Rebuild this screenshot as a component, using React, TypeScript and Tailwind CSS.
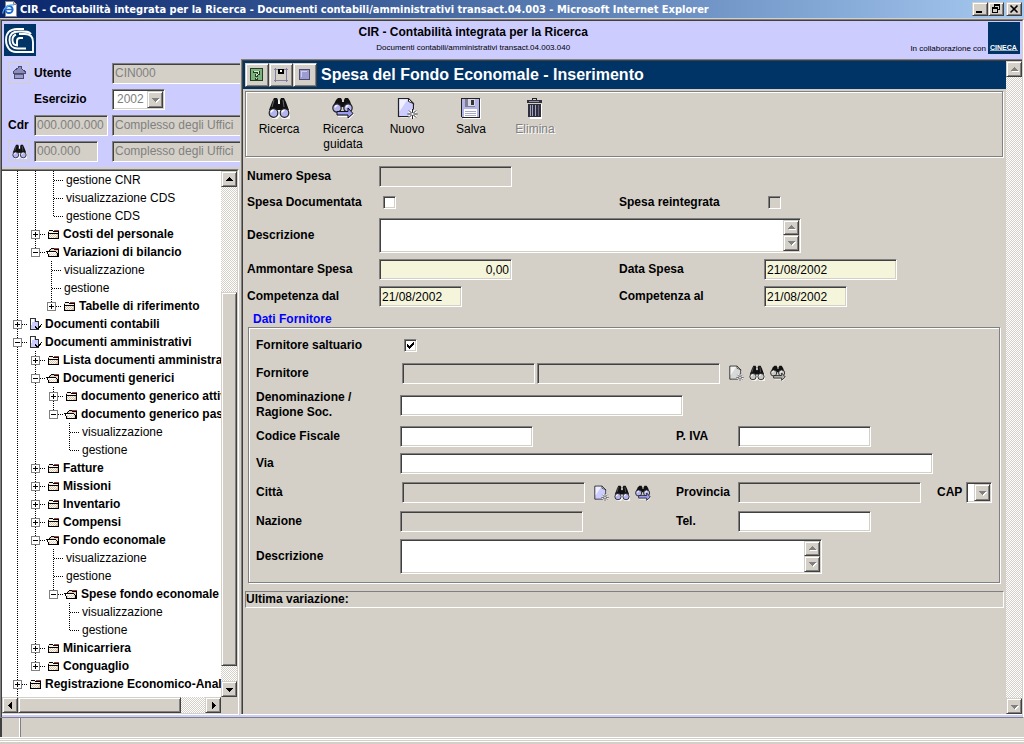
import React from "react";
import clsx from "clsx";

const sunken =
  "border border-t-[#808080] border-l-[#808080] border-r-white border-b-white shadow-[inset_1px_1px_0_#404040,inset_-1px_-1px_0_#d4d0c8]";
const raised =
  "border border-t-[#d4d0c8] border-l-[#d4d0c8] border-r-[#404040] border-b-[#404040] bg-[#d4d0c8] shadow-[inset_1px_1px_0_#fff,inset_-1px_-1px_0_#808080]";
const etched = "border border-[#808080] shadow-[inset_1px_1px_0_#fff,1px_1px_0_#fff]";
const dither = "bg-[repeating-conic-gradient(#fff_0_25%,#d4d0c8_0_50%)] bg-[length:2px_2px]";

/* ---------- icons ---------- */

interface IconProps {
  size?: number;
  muted?: boolean;
}

function Binoculars({ size = 22, muted }: IconProps) {
  const lens = muted ? "#c8c8c4" : "#b4b4ee";
  return (
    <svg width={size} height={size} viewBox="0 0 22 22" aria-hidden="true">
      <path d="M6 2h4l1 2 1-2h4l6 12v6l-4 2h-4l-3-4-3 4H5l-4-3v-5z" fill="#fff" transform="translate(1 1)" opacity=".8" />
      <path d="M6 1h3l1 2v10H1l3-8z" fill="#111" />
      <path d="M13 1h3l2 4 3 8h-9V3z" fill="#111" />
      <path d="M9 7h4v6H9z" fill="#111" />
      <path d="M6 3 4 10M15 3l1 7" stroke="#666" strokeWidth="1" fill="none" />
      <circle cx="5.5" cy="16" r="4.3" fill={lens} stroke="#222" strokeWidth="1.2" />
      <circle cx="16.5" cy="16" r="4.3" fill={lens} stroke="#222" strokeWidth="1.2" />
      <path d="M3 15.5a2.6 2.6 0 0 1 2.6-2.2M14 15.5a2.6 2.6 0 0 1 2.6-2.2" stroke="#fff" strokeWidth="1.4" fill="none" />
    </svg>
  );
}

function GuidedSearch({ size = 22, muted }: IconProps) {
  const lens = muted ? "#c8c8c4" : "#b4b4ee";
  const arrow = muted ? "#b0b0ac" : "#9c9cf0";
  return (
    <svg width={size} height={size} viewBox="0 0 22 22" aria-hidden="true">
      <path d="M6 1h3l1 2v6H1l3-6z" fill="#111" />
      <path d="M13 1h3l2 3 2 6h-8V3z" fill="#111" />
      <path d="M9 5h4v5H9z" fill="#111" />
      <circle cx="5" cy="11" r="4.2" fill={lens} stroke="#222" strokeWidth="1.2" />
      <circle cx="16" cy="11" r="4.2" fill={lens} stroke="#222" strokeWidth="1.2" />
      <path d="M3 10.5a2.4 2.4 0 0 1 2.4-2M14 10.5a2.4 2.4 0 0 1 2.4-2" stroke="#fff" strokeWidth="1.3" fill="none" />
      <path d="M6 19.500h11v2.500l5-5" stroke="#fff" fill="none" />
      <path d="M5 14.500h11v-3.500l5 5.500-5 4.500v-3H5z" fill={arrow} stroke="#111" strokeWidth="1" />
    </svg>
  );
}

function NewDocument({ size = 22, muted }: IconProps) {
  return (
    <svg width={size} height={size} viewBox="0 0 22 22" aria-hidden="true">
      <path d="M3.500 2.500h10l4 5v12h-14z" fill="#fff" transform="translate(1 1)" />
      <path d="M2.500 1.500h10l5 5v13h-15z" fill={muted ? "#d8d8d8" : "#ccccff"} stroke="#222" strokeWidth="1.200" />
      <path d="M3.500 2.500h8l-8 12z" fill="#fff" opacity=".7" />
      <path d="M12.500 1.500v3l5 2z" fill="#fff" stroke="#222" strokeWidth="1" />
      <path d="M16.500 12.500v9M12 17h9M13.300 13.700l6.600 6.600M19.900 13.700l-6.600 6.600" stroke="#fff" strokeWidth="2.600" />
      <path d="M16.500 12v10M11.500 17h10M13 13.500l7 7M20 13.500l-7 7" stroke="#222" strokeWidth="1" />
      <circle cx="16.500" cy="17" r="1.200" fill="#fff" />
    </svg>
  );
}

function Floppy() {
  return (
    <svg width="22" height="22" viewBox="0 0 22 22" shapeRendering="crispEdges" aria-hidden="true">
      <path d="M2 2h19v20H3z" fill="#fff" />
      <path d="M1.500 1.500h18v19h-17l-1-1z" fill="#b4b4e8" stroke="#222" />
      <path d="M5 2h10v8H5z" fill="#808090" />
      <path d="M8 2h7v7H8z" fill="#d8d8e8" />
      <path d="M11 3h3v5h-3z" fill="#333" />
      <path d="M4 12h13v8H4z" fill="#fff" />
      <path d="M5 14h11M5 16.500h11M5 18.500h11" stroke="#a8a8c8" />
    </svg>
  );
}

function Trash() {
  return (
    <svg width="22" height="22" viewBox="0 0 22 22" shapeRendering="crispEdges" aria-hidden="true">
      <path d="M5 7h13v15H6z" fill="#fff" />
      <path d="M8.500 3V1.500h4V3" stroke="#222" fill="none" />
      <path d="M3 3h15v3H3z" fill="#30303c" />
      <path d="M5 4h10v1H5z" fill="#9090a8" />
      <path d="M4 7h13v13H4z" fill="#30303c" />
      <path d="M6.500 8v11M8.500 8v11M11.500 8v11" stroke="#a4a4c4" />
      <path d="M14.500 8v11" stroke="#666680" />
    </svg>
  );
}

function HomeIcon() {
  return (
    <svg width="16" height="16" viewBox="0 0 16 16" shapeRendering="crispEdges" aria-hidden="true">
      <path d="M2 6.500 7 3V1h3v2l4 3.500V8H2z" fill="#8c8cc0" stroke="#4c4c68" />
      <path d="M3.500 8.500h9v5h-9z" fill="#9c9ccc" stroke="#4c4c68" />
      <path d="M4 9h8v1H4z" fill="#5c5c80" />
    </svg>
  );
}

function CnrLogo() {
  return (
    <svg width="32" height="32" viewBox="0 0 32 32" role="img" aria-label="CNR" className="shrink-0">
      <rect width="32" height="32" fill="#003366" />
      <g fill="none" stroke="#fff" strokeWidth="1.900">
        <path d="M20 5h-7C5 5 2 10 2 16c0 7 4 12 10 12h17V18c0-6-3-8-8-8h-6" />
        <path d="M27 10C25 7 21 7.500 15 7.500 9 7.500 5.500 10 5.500 16c0 5 3 8.500 8 8.500h8.500" />
        <path d="M12 10.500c-3 1-3.500 3-3.500 5.500 0 4 2 5.500 5.500 5.500M19 14h-3c-2 0-3 1-3 3v4" />
      </g>
    </svg>
  );
}

function CinecaLogo() {
  return (
    <svg width="32" height="32" viewBox="0 0 32 32" role="img" aria-label="CINECA" className="shrink-0">
      <rect width="32" height="32" fill="#003366" />
      <text x="2" y="28" fontFamily="Liberation Sans, sans-serif" fontSize="7" fontWeight="700" fill="#fff">
        CINECA
      </text>
      <path d="M2 28.500h28" stroke="#fff" strokeWidth="1" opacity=".6" />
    </svg>
  );
}

function ExplorerIcon() {
  return (
    <svg width="16" height="16" viewBox="0 0 16 16" aria-hidden="true">
      <path d="M3.500.500h8l3 3v12h-11z" fill="#fff" stroke="#888" />
      <path d="M11.500.500v3h3" fill="#d4d0c8" stroke="#888" />
      <circle cx="7" cy="8.500" r="3.600" fill="none" stroke="#1c6cd8" strokeWidth="2" />
      <path d="M4 8.500h6.500" stroke="#1c6cd8" strokeWidth="1.500" />
      <path d="M1 12.500C0 8 6 3 12 4" fill="none" stroke="#5ca8f0" strokeWidth="1.200" />
    </svg>
  );
}

type Direction = "up" | "down" | "left" | "right";

const arrowPaths: Record<Direction, string> = {
  up: "M4 9h7v-1h-1v-1h-1v-1h-1v-1h-1v1h-1v1h-1v1h-1z",
  down: "M4 6h7v1h-1v1h-1v1h-1v1h-1v-1h-1v-1h-1v-1h-1z",
  left: "M9 4v7h-1v-1h-1v-1h-1v-1h-1v-1h1v-1h1v-1h1v-1z",
  right: "M6 4v7h1v-1h1v-1h1v-1h1v-1h-1v-1h-1v-1h-1v-1z",
};

function Arrow({ dir, disabled }: { dir: Direction; disabled?: boolean }) {
  return (
    <svg width="15" height="15" viewBox="0 0 15 15" className="shrink-0" shapeRendering="crispEdges" aria-hidden="true">
      {disabled && <path d={arrowPaths[dir]} fill="#fff" transform="translate(1 1)" />}
      <path d={arrowPaths[dir]} fill={disabled ? "#808080" : "#000"} />
    </svg>
  );
}

function ScrollButton({ dir, disabled, className }: { dir: Direction; disabled?: boolean; className?: string }) {
  return (
    <button
      type="button"
      disabled={disabled}
      aria-label={`Scorri ${dir}`}
      className={clsx(raised, "flex items-center justify-center overflow-hidden", className ?? "size-4 shrink-0")}
    >
      <Arrow dir={dir} disabled={disabled} />
    </button>
  );
}

/* ---------- form controls ---------- */

function Label({ htmlFor, children }: { htmlFor: string; children: React.ReactNode }) {
  return (
    <label htmlFor={htmlFor} className="font-bold whitespace-nowrap">
      {children}
    </label>
  );
}

interface FieldProps {
  id: string;
  className: string;
  value?: string;
  label?: string;
  disabled?: boolean;
  required?: boolean;
}

function Field({ id, className, value = "", label, disabled, required }: FieldProps) {
  return (
    <input
      id={id}
      type="text"
      aria-label={label}
      defaultValue={value}
      disabled={disabled}
      className={clsx(
        sunken,
        "h-[21px] px-[2px] outline-none",
        disabled ? "bg-[#d4d0c8] text-[#808080]" : required ? "bg-[#f5f5dc]" : "bg-white",
        className
      )}
    />
  );
}

function TextArea({ id }: { id: string }) {
  return (
    <div className={clsx(sunken, "flex h-[35px] w-[422px] bg-white p-px")}>
      <textarea id={id} className="min-w-0 flex-1 resize-none overflow-hidden px-[2px] outline-none" />
      <div className="flex w-4 flex-col">
        <ScrollButton dir="up" disabled className="min-h-0 flex-1" />
        <ScrollButton dir="down" disabled className="min-h-0 flex-1" />
      </div>
    </div>
  );
}

function CheckBox({ id, checked, disabled }: { id: string; checked?: boolean; disabled?: boolean }) {
  return (
    <span className="ml-1 grid size-[13px]">
      <input
        id={id}
        type="checkbox"
        defaultChecked={checked}
        disabled={disabled}
        className={clsx(
          sunken,
          "peer col-start-1 row-start-1 size-[13px] appearance-none",
          disabled ? "bg-[#d4d0c8]" : "bg-white"
        )}
      />
      <svg
        viewBox="0 0 13 13"
        shapeRendering="crispEdges"
        className="pointer-events-none invisible col-start-1 row-start-1 size-[13px] peer-checked:visible"
        aria-hidden="true"
      >
        <path d="M3 5h1v1h1v1h1V6h1V5h1V4h1V3h1v3H9v1H8v1H7v1H6v1H5V9H4V8H3z" />
      </svg>
    </span>
  );
}

function Select({ id, value, className }: { id: string; value: string; className: string }) {
  return (
    <span className={clsx(sunken, "relative flex h-[21px] bg-white p-px", className)}>
      <select id={id} disabled className="w-full appearance-none pl-[3px] text-[#808080] opacity-100 outline-none">
        <option>{value}</option>
      </select>
      <span className={clsx(raised, "pointer-events-none absolute inset-y-px right-px flex w-4 items-center justify-center")}>
        <Arrow dir="down" disabled />
      </span>
    </span>
  );
}

function LookupButtons({ muted }: { muted?: boolean }) {
  return (
    <div className="ml-2 flex gap-[5px]">
      <button type="button" disabled={muted} aria-label="Nuovo">
        <NewDocument size={16} muted={muted} />
      </button>
      <button type="button" disabled={muted} aria-label="Ricerca">
        <Binoculars size={16} muted={muted} />
      </button>
      <button type="button" disabled={muted} aria-label="Ricerca guidata">
        <GuidedSearch size={16} muted={muted} />
      </button>
    </div>
  );
}

/* ---------- navigation tree ---------- */

type Kind = "leaf" | "closed" | "open" | "docClosed" | "docOpen";

interface TreeRow {
  // one char per ancestor: "|" draws a guide, "." leaves the column blank
  guides: string;
  kind: Kind;
  label: string;
  last?: boolean;
}

const treeRows: TreeRow[] = [
  { guides: "||", kind: "leaf", label: "gestione CNR" },
  { guides: "||", kind: "leaf", label: "visualizzazione CDS" },
  { guides: "||", kind: "leaf", label: "gestione CDS", last: true },
  { guides: "|", kind: "closed", label: "Costi del personale" },
  { guides: "|", kind: "open", label: "Variazioni di bilancio", last: true },
  { guides: "|.", kind: "leaf", label: "visualizzazione" },
  { guides: "|.", kind: "leaf", label: "gestione" },
  { guides: "|.", kind: "closed", label: "Tabelle di riferimento", last: true },
  { guides: "", kind: "docClosed", label: "Documenti contabili" },
  { guides: "", kind: "docOpen", label: "Documenti amministrativi" },
  { guides: "|", kind: "closed", label: "Lista documenti amministrativi" },
  { guides: "|", kind: "open", label: "Documenti generici" },
  { guides: "||", kind: "closed", label: "documento generico attivo" },
  { guides: "||", kind: "open", label: "documento generico passivo", last: true },
  { guides: "||.", kind: "leaf", label: "visualizzazione" },
  { guides: "||.", kind: "leaf", label: "gestione", last: true },
  { guides: "|", kind: "closed", label: "Fatture" },
  { guides: "|", kind: "closed", label: "Missioni" },
  { guides: "|", kind: "closed", label: "Inventario" },
  { guides: "|", kind: "closed", label: "Compensi" },
  { guides: "|", kind: "open", label: "Fondo economale" },
  { guides: "||", kind: "leaf", label: "visualizzazione" },
  { guides: "||", kind: "leaf", label: "gestione" },
  { guides: "||", kind: "open", label: "Spese fondo economale", last: true },
  { guides: "||.", kind: "leaf", label: "visualizzazione" },
  { guides: "||.", kind: "leaf", label: "gestione", last: true },
  { guides: "|", kind: "closed", label: "Minicarriera" },
  { guides: "|", kind: "closed", label: "Conguaglio", last: true },
  { guides: "", kind: "closed", label: "Registrazione Economico-Analitica" },
  { guides: "", kind: "closed", label: "gestione CIR" },
];

function TreeIcon({ kind }: { kind: Kind }) {
  return (
    <svg width="19" height="18" viewBox="0 0 19 18" className="shrink-0" shapeRendering="crispEdges" aria-hidden="true">
      {kind === "closed" && (
        <>
          <path d="M4 6h11v8H4z" fill="#e0c4a8" />
          <path d="M5 9h1v1H5zM7 9h1v1H7zM9 9h1v1H9zM11 9h1v1h-1zM6 10h1v1H6zM8 10h1v1H8zM10 10h1v1h-1zM12 10h1v1h-1zM5 11h1v1H5zM7 11h1v1H7zM9 11h1v1H9zM11 11h1v1h-1zM6 12h1v1H6zM8 12h1v1H8zM10 12h1v1h-1z" fill="#fff" />
          <path d="M5 6h4v1h5v1H5z" fill="#f8f0e4" />
          <path d="M4.500 14V6.500M5 5.500h4M4 8.500h11M4 13.500h11" stroke="#000" fill="none" />
          <path d="M9 6.500h5" stroke="#000" />
          <path d="M14.500 6v8" stroke="#000" />
          <path d="M10 5.500h5" stroke="#a04040" />
        </>
      )}
      {kind === "open" && (
        <>
          <path d="M5 6h9v8H5z" fill="#e8d4bc" />
          <path d="M2 8h10v2H2z" fill="#fff" />
          <path d="M2 8.500h10M3.500 9v2M4.500 11v3M5 13.500h10M12.500 9v1M13.500 10v3" stroke="#000" fill="none" />
          <path d="M5 7.500h1M6 6.500h1M7 5.500h3M10 6.500h4M14.500 6v8" stroke="#000" fill="none" />
          <path d="M6 10h1v1H6zM8 10h1v1H8zM10 10h1v1h-1zM7 11h1v1H7zM9 11h1v1H9zM11 11h1v1h-1zM6 12h1v1H6zM8 12h1v1H8zM10 12h1v1h-1z" fill="#fff" />
          <path d="M10 5.500h5" stroke="#a04040" />
        </>
      )}
      {(kind === "docClosed" || kind === "docOpen") && (
        <>
          <path d="M4.500 3.500h5l3 3v8h-8z" fill="#ccccff" stroke="#333" />
          <path d="M5 4h3v3H6v3H5z" fill="#fff" />
          <path d="M9.500 3.500v3h3" fill="#fff" stroke="#333" />
          <path d="M9 11.500h1M10 12.500h1M11 13.500h1M12 12.500h1M13 11.500h1M14 10.500h1M15 9.500h1" stroke="#000" />
          <path d="M9 12.500h1M10 13.500h3M13 12.500h1M14 11.500h1" stroke="#000" />
        </>
      )}
    </svg>
  );
}

function TreeNode({ row }: { row: TreeRow }) {
  const leaf = row.kind === "leaf";
  const expanded = row.kind === "open" || row.kind === "docOpen";
  return (
    <li className="flex h-[18px] items-center whitespace-nowrap">
      {row.guides.split("").map((g, i) => (
        <svg key={i} width={g === "|" ? 18 : 16} height="18" className="shrink-0" shapeRendering="crispEdges" aria-hidden="true">
          {g === "|" && <path d="M9.500 0v18" stroke="#000" strokeDasharray="1 1" />}
        </svg>
      ))}
      <svg width="18" height="18" className="shrink-0 overflow-visible" shapeRendering="crispEdges" aria-hidden="true">
        <path d={row.last ? "M9.500 0v10" : "M9.500 0v18"} stroke="#000" strokeDasharray="1 1" />
        <path d={leaf ? "M10 9.500h9" : "M14 9.500h6"} stroke="#000" strokeDasharray="1 1" />
        {!leaf && (
          <>
            <rect x="5.500" y="5.500" width="8" height="8" fill="#fff" stroke="#808080" />
            <path d={expanded ? "M7 9.500h5" : "M7 9.500h5M9.500 7v5"} stroke="#000" />
          </>
        )}
      </svg>
      {!leaf && <TreeIcon kind={row.kind} />}
      <a href="#" className={leaf ? "pl-1" : "font-bold"}>
        {row.label}
      </a>
    </li>
  );
}

function NavigationTree() {
  return (
    <div className="min-h-0 flex-1 border-t-2 border-r border-[#d4d0c8] bg-[#d4d0c8]">
      <div className="flex h-full flex-col border-t border-r border-b border-t-[#808080] border-r-white border-b-white">
        <div className="flex min-h-0 flex-1 flex-col border-t border-r border-b border-t-[#404040] border-r-[#d4d0c8] border-b-[#d4d0c8]">
          <div className="flex min-h-0 flex-1">
            <nav className="min-w-0 flex-1 overflow-hidden bg-white">
              <ul className="pl-[6px]">
                {treeRows.map((row, i) => (
                  <TreeNode key={i} row={row} />
                ))}
              </ul>
            </nav>
            <div className={clsx(dither, "flex w-4 flex-col")}>
              <ScrollButton dir="up" />
              <div className="grow-[106]" />
              <div className={clsx(raised, "grow-[374]")} />
              <div className="grow-[15]" />
              <ScrollButton dir="down" />
            </div>
          </div>
          <div className="flex h-4">
            <div className={clsx(dither, "flex flex-1")}>
              <ScrollButton dir="left" />
              <div className={clsx(raised, "grow-[163]")} />
              <div className="grow-[24]" />
              <ScrollButton dir="right" />
            </div>
            <div className="w-4" />
          </div>
        </div>
      </div>
    </div>
  );
}

/* ---------- page sections ---------- */

function WindowTitle() {
  const button = clsx(raised, "flex h-[14px] w-4 items-center justify-center");
  return (
    <div className="flex h-[18px] items-center bg-linear-to-r from-[#0a246a] to-[#a6caf0] pr-[2px] pl-[2px]">
      <ExplorerIcon />
      <h1 className="ml-[2px] min-w-0 flex-1 truncate font-['DejaVu_Sans_Condensed','Noto_Sans',sans-serif] text-[11px] font-bold text-white">
        CIR - Contabilità integrata per la Ricerca - Documenti contabili/amministrativi transact.04.003 - Microsoft
        Internet Explorer
      </h1>
      <button type="button" aria-label="Riduci a icona" className={button}>
        <svg width="12" height="12" viewBox="0 0 12 12" shapeRendering="crispEdges">
          <path d="M2 8h6v2H2z" />
        </svg>
      </button>
      <button type="button" aria-label="Ripristina" className={button}>
        <svg width="12" height="12" viewBox="0 0 12 12" shapeRendering="crispEdges">
          <path d="M4 1h6v2H4zM4 3h1v1H4zM9 3h1v4H9zM8 6h1v1H8zM2 4h6v2H2zM2 6h1v4H2zM7 6h1v4H7zM3 9h4v1H3z" />
        </svg>
      </button>
      <button type="button" aria-label="Chiudi" className={clsx(button, "ml-[2px]")}>
        <svg width="12" height="12" viewBox="0 0 12 12">
          <path d="M2.500 2.500l7 7M9.500 2.500l-7 7" stroke="#000" strokeWidth="1.600" />
        </svg>
      </button>
    </div>
  );
}

function SessionPanel() {
  const iconButton = "flex size-[22px] items-center justify-center border border-[#d4d0c8]";
  const row = "grid h-[26px] grid-cols-[26px_78px_1fr] items-center";
  return (
    <div className="overflow-hidden pt-px pb-[3px] pl-[6px]">
      <div className={row}>
        <button type="button" aria-label="Home" className={iconButton}>
          <HomeIcon />
        </button>
        <Label htmlFor="utente">Utente</Label>
        <Field id="utente" className="w-[200px]" value="CIN000" disabled />
      </div>
      <div className={row}>
        <span />
        <Label htmlFor="esercizio">Esercizio</Label>
        <Select id="esercizio" value="2002" className="w-[53px]" />
      </div>
      <div className={row}>
        <Label htmlFor="cdr">Cdr</Label>
        <Field id="cdr" className="w-[74px]" value="000.000.000" disabled />
        <Field id="cdr-desc" label="Descrizione Cdr" className="w-[200px]" value="Complesso degli Uffici" disabled />
      </div>
      <div className={row}>
        <button type="button" aria-label="Cerca unità" className={iconButton}>
          <Binoculars size={15} />
        </button>
        <Field id="uo" label="Unità" className="w-[64px]" value="000.000" disabled />
        <Field id="uo-desc" label="Descrizione unità" className="w-[200px]" value="Complesso degli Uffici" disabled />
      </div>
    </div>
  );
}

function ToolButton({ icon, label, disabled }: { icon: React.ReactNode; label: string; disabled?: boolean }) {
  return (
    <button
      type="button"
      disabled={disabled}
      className={clsx(
        "flex w-16 flex-col items-center px-2 text-center leading-[15px]",
        disabled && "text-[#808080] [text-shadow:1px_1px_0_#fff]"
      )}
    >
      <span className="mb-[2px] flex h-6 items-center">{icon}</span>
      {label}
    </button>
  );
}

function TitleBar() {
  const button = clsx(raised, "flex size-6 items-center justify-center");
  return (
    <div className="flex h-7 shrink-0 items-center bg-[#003366] pl-[2px] text-white">
      <button type="button" aria-label="Aiuto" className={button}>
        <svg width="14" height="14" viewBox="0 0 14 14" shapeRendering="crispEdges">
          <path d="M.500.500h12v12H.500z" fill="#7cb07c" stroke="#224022" />
          <path d="M3 3h7v4H8v2H5V6h2V5H3zM5 10h3v2H5z" fill="#224022" />
          <path d="M4 3h5v1H4zM8 4h1v2H8zM6 6h2v1H6zM6 7h1v1H6zM6 10h1v1H6z" fill="#cfe8cf" />
        </svg>
      </button>
      <button type="button" aria-label="Riduci" className={button}>
        <svg width="14" height="14" viewBox="0 0 14 14" shapeRendering="crispEdges">
          <path d="M1.500 0v14M12.500 0v14M0 12.500h14M0 1.500h14" stroke="#8080a8" fill="none" />
          <path d="M4 1h6v5H4z" />
          <path d="M6 2h2v2H6z" fill="#fff" />
        </svg>
      </button>
      <button type="button" aria-label="Ingrandisci" className={button}>
        <svg width="14" height="14" viewBox="0 0 14 14" shapeRendering="crispEdges">
          <path d="M1.500 1.500h10v10h-10z" fill="#9c9cd0" stroke="#4c4c70" />
          <path d="M3 3h6v1H4v5H3z" fill="#ccccf4" />
        </svg>
      </button>
      <h2 className="ml-1 text-base leading-5 font-bold">Spesa del Fondo Economale - Inserimento</h2>
    </div>
  );
}

function ExpenseForm() {
  const row = "grid grid-cols-[132px_240px_145px_1fr] items-center";
  return (
    <div className="mt-[6px] pl-1">
      <div className={clsx(row, "h-[27px]")}>
        <Label htmlFor="numero">Numero Spesa</Label>
        <Field id="numero" className="w-[133px]" disabled />
      </div>
      <div className={clsx(row, "h-6")}>
        <Label htmlFor="documentata">Spesa Documentata</Label>
        <CheckBox id="documentata" />
        <Label htmlFor="reintegrata">Spesa reintegrata</Label>
        <CheckBox id="reintegrata" disabled />
      </div>
      <div className={clsx(row, "h-[42px]")}>
        <Label htmlFor="descrizione">Descrizione</Label>
        <div className="col-span-3">
          <TextArea id="descrizione" />
        </div>
      </div>
      <div className={clsx(row, "h-[27px]")}>
        <Label htmlFor="ammontare">Ammontare Spesa</Label>
        <Field id="ammontare" className="w-[133px] text-right" value="0,00" required />
        <Label htmlFor="data">Data Spesa</Label>
        <Field id="data" className="w-[133px]" value="21/08/2002" required />
      </div>
      <div className={clsx(row, "h-[27px]")}>
        <Label htmlFor="dal">Competenza dal</Label>
        <Field id="dal" className="w-[83px]" value="21/08/2002" required />
        <Label htmlFor="al">Competenza al</Label>
        <Field id="al" className="w-[83px]" value="21/08/2002" required />
      </div>
    </div>
  );
}

function SupplierForm() {
  const row = "grid grid-cols-[144px_276px_62px_1fr] items-center";
  return (
    <section className="mt-[2px] mr-[6px] ml-[5px]">
      <h3 className="pl-[5px] leading-[15px] font-bold text-[#0000ff]">Dati Fornitore</h3>
      <div className={clsx(etched, "pt-1 pb-[5px] pl-[7px]")}>
        <div className={clsx(row, "h-[27px]")}>
          <Label htmlFor="saltuario">Fornitore saltuario</Label>
          <CheckBox id="saltuario" checked />
        </div>
        <div className={clsx(row, "h-7")}>
          <Label htmlFor="fornitore">Fornitore</Label>
          <div className="col-span-3 flex items-center pl-[2px]">
            <Field id="fornitore" className="w-[133px]" disabled />
            <Field id="fornitore-desc" label="Descrizione fornitore" className="ml-[2px] w-[183px]" disabled />
            <LookupButtons muted />
          </div>
        </div>
        <div className={clsx(row, "h-9")}>
          <label htmlFor="denominazione" className="leading-[15px] font-bold">
            Denominazione /
            <br />
            Ragione Soc.
          </label>
          <div className="col-span-3 flex">
            <Field id="denominazione" className="w-[283px]" />
          </div>
        </div>
        <div className={clsx(row, "h-[27px]")}>
          <Label htmlFor="cf">Codice Fiscale</Label>
          <Field id="cf" className="w-[133px]" />
          <Label htmlFor="piva">P. IVA</Label>
          <Field id="piva" className="w-[133px]" />
        </div>
        <div className={clsx(row, "h-[27px]")}>
          <Label htmlFor="via">Via</Label>
          <div className="col-span-3 flex">
            <Field id="via" className="w-[533px]" />
          </div>
        </div>
        <div className={clsx(row, "h-[31px]")}>
          <Label htmlFor="citta">Città</Label>
          <div className="flex items-center pl-[2px]">
            <Field id="citta" className="w-[183px]" disabled />
            <LookupButtons />
          </div>
          <Label htmlFor="provincia">Provincia</Label>
          <div className="flex items-center">
            <Field id="provincia" className="mr-4 w-[183px]" disabled />
            <Label htmlFor="cap">CAP</Label>
            <Select id="cap" value="" className="ml-1 w-[26px]" />
          </div>
        </div>
        <div className={clsx(row, "h-[27px]")}>
          <Label htmlFor="nazione">Nazione</Label>
          <Field id="nazione" className="w-[183px]" disabled />
          <Label htmlFor="tel">Tel.</Label>
          <Field id="tel" className="w-[133px]" />
        </div>
        <div className={clsx(row, "h-[42px]")}>
          <Label htmlFor="fornitore-note">Descrizione</Label>
          <div className="col-span-3">
            <TextArea id="fornitore-note" />
          </div>
        </div>
      </div>
    </section>
  );
}

export default function App() {
  return (
    <div className="flex h-screen flex-col bg-[#d4d0c8] font-['Liberation_Sans',Arial,sans-serif] text-[12px] leading-[15px] text-black">
      <WindowTitle />
      <div className="mt-px flex min-h-0 flex-1 flex-col border border-t-[#808080] border-r-white border-b-[#808080] border-l-[#808080]">
        <div className="flex min-h-0 flex-1 flex-col border-t border-r border-l border-t-[#404040] border-r-[#d4d0c8] border-l-[#404040] bg-[#ccccff] pb-[2px]">
          <header className="flex h-[38px] shrink-0 items-center px-[2px]">
            <CnrLogo />
            <div className="flex-1 text-center">
              <p className="leading-4 font-bold">CIR - Contabilità integrata per la Ricerca</p>
              <p className="text-[8px] leading-4">Documenti contabili/amministrativi transact.04.003.040</p>
            </div>
            <div className="flex items-end gap-[2px] pb-1 text-[8px]">
              <span className="leading-[10px]">In collaborazione con</span>
              <CinecaLogo />
            </div>
          </header>

          <div className="flex min-h-0 flex-1">
            <aside className="flex w-[238px] shrink-0 flex-col">
              <SessionPanel />
              <NavigationTree />
            </aside>

            <div className="flex min-w-0 flex-1 border-b border-l border-b-white border-l-[#d4d0c8]">
              <div className="flex min-w-0 flex-1 border-t border-l border-[#808080]">
                <div className="flex min-w-0 flex-1 border-t border-l border-[#404040] bg-[#d4d0c8]">
                  <main className="flex min-w-0 flex-1 flex-col overflow-hidden">
                    <TitleBar />
                    <div className={clsx(etched, "mt-[2px] mr-[3px] ml-[2px] flex h-[66px] shrink-0 items-start pt-1 pl-px")}>
                      <ToolButton icon={<Binoculars />} label="Ricerca" />
                      <ToolButton icon={<GuidedSearch />} label="Ricerca guidata" />
                      <ToolButton icon={<NewDocument />} label="Nuovo" />
                      <ToolButton icon={<Floppy />} label="Salva" />
                      <ToolButton icon={<Trash />} label="Elimina" disabled />
                    </div>
                    <ExpenseForm />
                    <SupplierForm />
                    <p className="mt-2 mr-[2px] ml-[2px] border border-t-[#808080] border-r-white border-b-white border-l-[#808080] font-bold">
                      Ultima variazione:
                    </p>
                  </main>
                  <div className={clsx(dither, "flex w-4 shrink-0 flex-col justify-between")}>
                    <ScrollButton dir="up" disabled />
                    <ScrollButton dir="down" disabled />
                  </div>
                </div>
              </div>
            </div>
          </div>
        </div>
      </div>
      <footer className="flex h-5 shrink-0 border-b border-white">
        <div className="w-5 border-r border-l-2 border-r-white border-l-[#404040]" />
        <div className="flex-1 border-r-2 border-l border-[#d4d0c8] border-l-[#808080]" />
      </footer>
      <div className="my-px h-px shrink-0 bg-white" />
      <div className="mb-[2px] h-px shrink-0 bg-white" />
    </div>
  );
}
